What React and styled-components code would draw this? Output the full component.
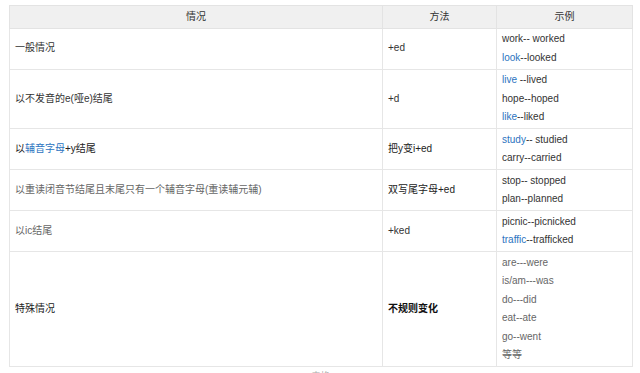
import React from "react";
import styled, { createGlobalStyle } from "styled-components";

const GlobalStyle = createGlobalStyle`
  html, body {
    margin: 0;
    padding: 0;
    background: #fff;
    font-family: "Liberation Sans", "Noto Sans CJK SC", sans-serif;
  }
`;

const rows = [
  {
    rule: [{ t: "一般情况" }],
    ruleTone: "dark",
    method: "+ed",
    examples: [
      [{ t: "work-- worked" }],
      [{ t: "look", link: true }, { t: "--looked" }],
    ],
  },
  {
    rule: [{ t: "以不发音的e(哑e)结尾" }],
    ruleTone: "dark",
    method: "+d",
    examples: [
      [{ t: "live", link: true }, { t: " --lived" }],
      [{ t: "hope--hoped" }],
      [{ t: "like", link: true }, { t: "--liked" }],
    ],
  },
  {
    rule: [{ t: "以" }, { t: "辅音字母", link: true }, { t: "+y结尾" }],
    ruleTone: "strong",
    method: "把y变i+ed",
    methodTone: "strong",
    examples: [
      [{ t: "study", link: true }, { t: "-- studied" }],
      [{ t: "carry--carried" }],
    ],
  },
  {
    rule: [{ t: "以重读闭音节结尾且末尾只有一个辅音字母(重读辅元辅)" }],
    ruleTone: "light",
    method: "双写尾字母+ed",
    methodTone: "strong",
    examples: [[{ t: "stop-- stopped" }], [{ t: "plan--planned" }]],
  },
  {
    rule: [{ t: "以ic结尾" }],
    ruleTone: "light",
    method: "+ked",
    examples: [
      [{ t: "picnic--picnicked" }],
      [{ t: "traffic", link: true }, { t: "--trafficked" }],
    ],
  },
  {
    rule: [{ t: "特殊情况" }],
    ruleTone: "strong",
    method: "不规则变化",
    methodTone: "bold",
    examples: [
      [{ t: "are---were" }],
      [{ t: "is/am---was" }],
      [{ t: "do---did" }],
      [{ t: "eat--ate" }],
      [{ t: "go--went" }],
      [{ t: "等等" }],
    ],
    light: true,
  },
];

const tones = {
  light: "#666",
  dark: "#333",
  strong: "#222",
  bold: "#111",
};

const Page = styled.div`
  padding: 5px 8px 0 9px;
`;

const Table = styled.table`
  width: 623px;
  border-collapse: collapse;
  table-layout: fixed;
  font-size: 10px;
  color: #333;
`;

const Head = styled.th`
  background: #f0f0f0;
  border: 1px solid #e3e3e3;
  font-weight: normal;
  color: #333;
  line-height: 18.5px;
  padding: 1.5px 5px;
  text-align: center;
`;

const Cell = styled.td`
  border: 1px solid #e6e6e6;
  padding: 1.5px 5px;
  line-height: 18.5px;
  vertical-align: middle;
  color: ${({ $tone }) => tones[$tone] || "#333"};
  font-weight: ${({ $tone }) => ($tone === "bold" ? "bold" : "normal")};
`;

const Line = styled.div`
  white-space: nowrap;
  color: ${({ $light }) => ($light ? "#666" : "#333")};
`;

const Link = styled.span`
  color: #2b73c0;
`;

const Caption = styled.div`
  margin-top: 2px;
  text-align: center;
  font-size: 9px;
  color: #aaa;
`;

function Piece({ parts }) {
  return parts.map((p, i) =>
    p.link ? <Link key={i}>{p.t}</Link> : <React.Fragment key={i}>{p.t}</React.Fragment>
  );
}

export default function App() {
  return (
    <>
      <GlobalStyle />
      <Page>
        <Table>
          <colgroup>
            <col style={{ width: 373 }} />
            <col style={{ width: 114 }} />
            <col style={{ width: 136 }} />
          </colgroup>
          <thead>
            <tr>
              <Head>情况</Head>
              <Head>方法</Head>
              <Head>示例</Head>
            </tr>
          </thead>
          <tbody>
            {rows.map((row, i) => (
              <tr key={i}>
                <Cell $tone={row.ruleTone}>
                  <Piece parts={row.rule} />
                </Cell>
                <Cell $tone={row.methodTone}>{row.method}</Cell>
                <Cell>
                  {row.examples.map((ex, j) => (
                    <Line key={j} $light={row.light}>
                      <Piece parts={ex} />
                    </Line>
                  ))}
                </Cell>
              </tr>
            ))}
          </tbody>
        </Table>
        <Caption>表格</Caption>
      </Page>
    </>
  );
}
